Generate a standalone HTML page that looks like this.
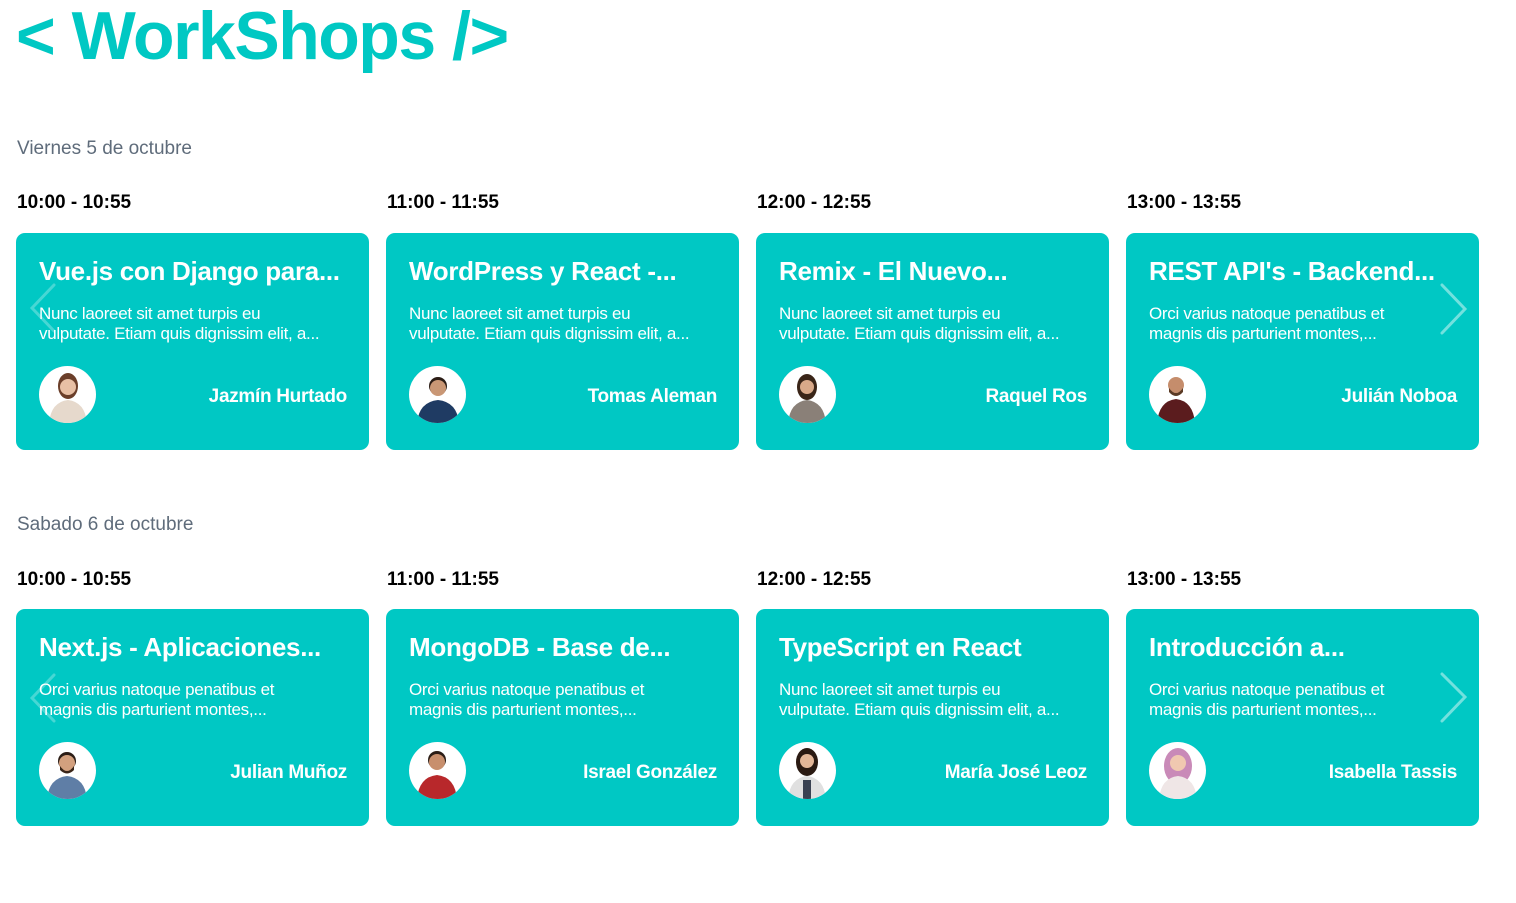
<!DOCTYPE html>
<html><head><meta charset="utf-8"><style>
*{margin:0;padding:0;box-sizing:border-box}
body{width:1516px;height:903px;background:#fff;font-family:"Liberation Sans",sans-serif;position:relative;overflow:hidden}
h1{position:absolute;left:16px;top:-3px;font-size:68px;font-weight:bold;color:#00c8c3;letter-spacing:-1.5px;white-space:nowrap}
.day{position:absolute;left:17px;font-size:19px;color:#5f6c7b}
.time{position:absolute;font-size:19px;font-weight:bold;color:#000}
.card{position:absolute;width:353px;height:217px;background:#00c8c4;border-radius:9px;color:#fff}
.card .t{position:absolute;left:23px;top:23px;font-size:26px;font-weight:bold;white-space:nowrap;letter-spacing:-0.3px}
.card .d{position:absolute;left:23px;top:71px;font-size:17px;line-height:20px;width:320px;white-space:nowrap;letter-spacing:-0.3px}
.card .av{position:absolute;left:23px;top:133px;width:57px;height:57px;border-radius:50%;background:#fff;overflow:hidden}
.card .n{position:absolute;right:22px;top:153px;font-size:19px;font-weight:bold;letter-spacing:-0.3px}
.chev{position:absolute}
</style></head><body>
<h1>&lt; WorkShops /&gt;</h1>

<div class="day" style="top:138px">Viernes 5 de octubre</div>
<div class="time" style="left:17px;top:192px">10:00 - 10:55</div>
<div class="time" style="left:387px;top:192px">11:00 - 11:55</div>
<div class="time" style="left:757px;top:192px">12:00 - 12:55</div>
<div class="time" style="left:1127px;top:192px">13:00 - 13:55</div>

<div class="card" style="left:16px;top:233px"><div class="t">Vue.js con Django para...</div><div class="d">Nunc laoreet sit amet turpis eu<br>vulputate. Etiam quis dignissim elit, a...</div><div class="av"><svg width="57" height="57"><ellipse cx="29" cy="20" rx="10" ry="13" fill="#6b3f2a"/><circle cx="29" cy="21" r="8" fill="#e8c0a5"/><path d="M10 57 Q12 36 29 34 Q46 36 48 57Z" fill="#e6d9cc"/></svg></div><div class="n">Jazmín Hurtado</div></div>
<div class="card" style="left:386px;top:233px"><div class="t">WordPress y React -...</div><div class="d">Nunc laoreet sit amet turpis eu<br>vulputate. Etiam quis dignissim elit, a...</div><div class="av"><svg width="57" height="57"><circle cx="29" cy="20" r="9" fill="#2b1d16"/><circle cx="29" cy="22" r="8" fill="#c99775"/><path d="M8 57 Q10 36 29 34 Q48 36 50 57Z" fill="#1f3b63"/></svg></div><div class="n">Tomas Aleman</div></div>
<div class="card" style="left:756px;top:233px"><div class="t">Remix - El Nuevo...</div><div class="d">Nunc laoreet sit amet turpis eu<br>vulputate. Etiam quis dignissim elit, a...</div><div class="av"><svg width="57" height="57"><ellipse cx="28" cy="21" rx="10" ry="13" fill="#3a2518"/><circle cx="28" cy="21" r="7" fill="#d9a989"/><path d="M9 57 Q11 36 28 34 Q45 36 47 57Z" fill="#8a8078"/></svg></div><div class="n">Raquel Ros</div></div>
<div class="card" style="left:1126px;top:233px"><div class="t">REST API's - Backend...</div><div class="d">Orci varius natoque penatibus et<br>magnis dis parturient montes,...</div><div class="av"><svg width="57" height="57"><circle cx="27" cy="19" r="8" fill="#c58d6c"/><path d="M20 22 Q27 32 34 22 L34 26 Q27 34 20 26Z" fill="#5a3a25"/><path d="M8 57 Q10 35 27 33 Q44 35 46 57Z" fill="#5b1c1e"/></svg></div><div class="n">Julián Noboa</div></div>

<svg class="chev" style="left:26px;top:280px" width="34" height="56"><path d="M28 5 L6 28 L28 51" fill="none" stroke="rgba(255,255,255,0.28)" stroke-width="3" stroke-linecap="round"/></svg>
<svg class="chev" style="left:1436px;top:280px" width="34" height="58"><path d="M6 5 L29 29 L6 53" fill="none" stroke="rgba(255,255,255,0.45)" stroke-width="3" stroke-linecap="round"/></svg>

<div class="day" style="top:514px">Sabado 6 de octubre</div>
<div class="time" style="left:17px;top:569px">10:00 - 10:55</div>
<div class="time" style="left:387px;top:569px">11:00 - 11:55</div>
<div class="time" style="left:757px;top:569px">12:00 - 12:55</div>
<div class="time" style="left:1127px;top:569px">13:00 - 13:55</div>

<div class="card" style="left:16px;top:609px"><div class="t">Next.js - Aplicaciones...</div><div class="d">Orci varius natoque penatibus et<br>magnis dis parturient montes,...</div><div class="av"><svg width="57" height="57"><circle cx="28" cy="19" r="9" fill="#2b1d16"/><circle cx="28" cy="21" r="8" fill="#d3a07e"/><path d="M21 24 Q28 34 35 24 L35 28 Q28 35 21 28Z" fill="#3a2518"/><path d="M8 57 Q10 36 28 34 Q46 36 48 57Z" fill="#5f7ea6"/></svg></div><div class="n">Julian Muñoz</div></div>
<div class="card" style="left:386px;top:609px"><div class="t">MongoDB - Base de...</div><div class="d">Orci varius natoque penatibus et<br>magnis dis parturient montes,...</div><div class="av"><svg width="57" height="57"><circle cx="28" cy="18" r="9" fill="#2b1d16"/><circle cx="28" cy="20" r="8" fill="#c88f6d"/><path d="M8 57 Q10 35 28 33 Q46 35 48 57Z" fill="#b8282b"/></svg></div><div class="n">Israel González</div></div>
<div class="card" style="left:756px;top:609px"><div class="t">TypeScript en React</div><div class="d">Nunc laoreet sit amet turpis eu<br>vulputate. Etiam quis dignissim elit, a...</div><div class="av"><svg width="57" height="57"><ellipse cx="28" cy="20" rx="11" ry="14" fill="#2a1a12"/><circle cx="28" cy="19" r="7" fill="#e3b798"/><path d="M9 57 Q11 36 28 34 Q45 36 47 57Z" fill="#e0e0e0"/><rect x="24" y="38" width="8" height="19" fill="#3a4252"/></svg></div><div class="n">María José Leoz</div></div>
<div class="card" style="left:1126px;top:609px"><div class="t">Introducción a...</div><div class="d">Orci varius natoque penatibus et<br>magnis dis parturient montes,...</div><div class="av"><svg width="57" height="57"><ellipse cx="29" cy="24" rx="14" ry="18" fill="#c98ab8"/><circle cx="29" cy="21" r="8" fill="#f0c8b0"/><path d="M10 57 Q12 36 29 34 Q46 36 48 57Z" fill="#efe6e6"/></svg></div><div class="n">Isabella Tassis</div></div>

<svg class="chev" style="left:26px;top:670px" width="34" height="56"><path d="M28 5 L6 28 L28 51" fill="none" stroke="rgba(255,255,255,0.28)" stroke-width="3" stroke-linecap="round"/></svg>
<svg class="chev" style="left:1436px;top:669px" width="34" height="58"><path d="M6 5 L29 28 L6 52" fill="none" stroke="rgba(255,255,255,0.45)" stroke-width="3" stroke-linecap="round"/></svg>
</body></html>
